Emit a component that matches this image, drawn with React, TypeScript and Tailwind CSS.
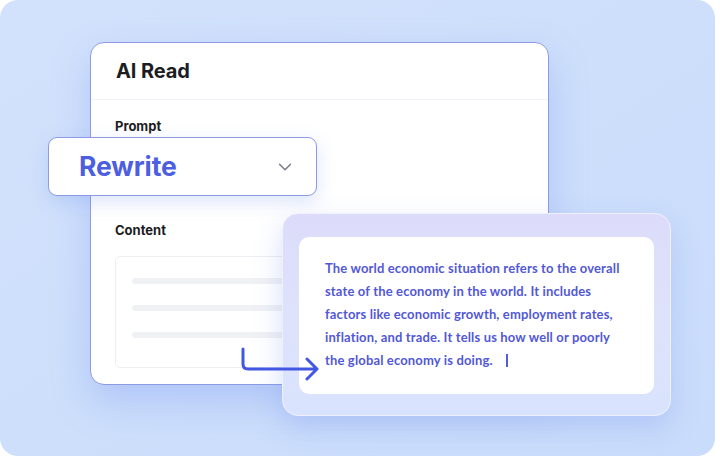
import { ChevronDown } from "lucide-react";

const summary = [
  "The world economic situation refers to the overall",
  "state of the economy in the world. It includes",
  "factors like economic growth, employment rates,",
  "inflation, and trade. It tells us how well or poorly",
  "the global economy is doing.",
];

function ArrowConnector() {
  return (
    <svg width="84" height="36" viewBox="0 0 84 36" fill="none" className="absolute left-[238px] top-[346px] z-30">
      <path
        d="M5 3 V18 Q5 23 10 23 H79 M69 13 L79 23 L69 33"
        stroke="#4257e2"
        strokeWidth="3"
        strokeLinecap="round"
        strokeLinejoin="round"
      />
    </svg>
  );
}

export default function App() {
  return (
    <div className="w-[720px] h-[459px] bg-white font-['Inter',sans-serif]">
      <div className="relative w-[715px] h-[456px] rounded-[18px] bg-gradient-to-br from-[#d3e2fc] via-[#cddffb] to-[#cadcfb] overflow-hidden">
        {/* main reader card */}
        <div className="absolute left-[90px] top-[42px] w-[459px] h-[343px] rounded-[14px] bg-white border border-[#8e9ae4] shadow-[0_16px_36px_rgba(120,150,240,0.35)]">
          <div className="h-[57px] flex items-center px-[25px] border-b border-[#f1f3f8]">
            <h1 className="text-[20px] font-bold text-[#1c1d22] tracking-[-0.1px]">AI Read</h1>
          </div>
          <div className="px-[24px] pt-[17px]">
            <p className="text-[13px] font-bold text-[#1c1d22]">Prompt</p>
            <div className="h-[84px]" />
            <p className="text-[13px] font-bold text-[#1c1d22]">Content</p>
            <div className="mt-[16px] h-[112px] rounded-[5px] border border-[#eceef2] px-[16px] pt-[21px] flex flex-col gap-[21px]">
              <div className="h-[6px] rounded-full bg-[#f0f1f4]" />
              <div className="h-[6px] rounded-full bg-[#f0f1f4]" />
              <div className="h-[6px] rounded-full bg-[#f0f1f4]" />
            </div>
          </div>
        </div>

        {/* prompt dropdown */}
        <div className="absolute left-[48px] top-[137px] z-20 w-[269px] h-[59px] rounded-[9px] bg-white border border-[#8e9ae4] shadow-[0_6px_18px_rgba(120,150,240,0.25)] flex items-center justify-between pl-[30px] pr-[20px]">
          <span className="text-[26.5px] font-bold text-[#4d5fe0] tracking-[-0.1px]">Rewrite</span>
          <ChevronDown size={22} strokeWidth={1.6} className="text-[#7a7d88]" />
        </div>

        {/* rewritten result panel */}
        <div className="absolute left-[282px] top-[213px] z-20 w-[389px] h-[203px] rounded-[16px] border border-[#eef0ff] bg-gradient-to-b from-[#dcdcfa] via-[#dfe2fb] to-[#d9e3fd] shadow-[0_12px_28px_rgba(120,150,240,0.3)] p-[16px] pt-[23px]">
          <div className="h-[157px] rounded-[10px] bg-white pl-[26px] pt-[20px] font-['Lato',sans-serif] text-[13px] font-bold text-[#5258d6] leading-[23px] tracking-[0.15px]">
            {summary.map((line, i) => (
              <p key={i} className="whitespace-nowrap">
                {line}
                {i === summary.length - 1 && (
                  <span className="inline-block ml-[13px] w-[2px] h-[13px] bg-[#4d5fe0] align-[-2px]" />
                )}
              </p>
            ))}
          </div>
        </div>

        <ArrowConnector />
      </div>
    </div>
  );
}
